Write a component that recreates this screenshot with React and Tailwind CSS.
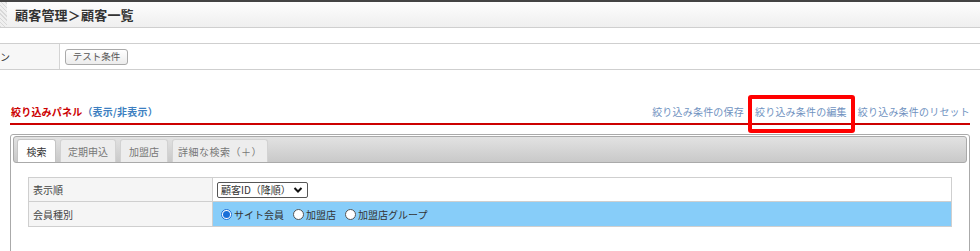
export default function App() {
  const font = { fontFamily: '"Noto Sans CJK JP", "Noto Sans", sans-serif' };
  return (
    <div className="relative w-[980px] h-[251px] bg-white overflow-hidden text-[#333]" style={font}>
      {/* top dark bar */}
      <div className="h-[2px] bg-[#444]" />
      {/* header */}
      <div className="flex h-[26px] border-b border-[#cfcfcf] bg-gradient-to-b from-[#fdfdfd] to-[#efefef]">
        <div className="w-[7px] bg-[repeating-linear-gradient(45deg,#d8d8d8_0px,#d8d8d8_1px,#efefef_1px,#efefef_3px)]" />
        <div className="pl-[8px] flex items-center text-[13px] font-bold text-[#333] tracking-[0.2px]">顧客管理＞顧客一覧</div>
      </div>
      <div className="h-[15px]" />
      {/* conditions row */}
      <div className="flex h-[27px] border-t border-b border-[#cfcfcf]">
        <div className="w-[60px] bg-[#f7f7f7] border-r border-[#d4d4d4] flex items-center text-[10px] text-[#333]">ン</div>
        <div className="flex items-center pl-[5px]">
          <div className="h-[16px] w-[63px] flex items-center justify-center border border-[#aaa] rounded-[3px] bg-gradient-to-b from-[#fff] to-[#ececec] text-[9.5px] text-[#555]">テスト条件</div>
        </div>
      </div>
      <div className="h-[33px]" />
      {/* panel title row */}
      <div className="mx-[10px] flex items-end justify-between h-[22px] pb-[4px] border-b-2 border-[#cc0000]">
        <div className="text-[10px] leading-[14px] pl-[1px] tracking-[0.2px]">
          <span className="font-bold text-[#cc0000]">絞り込みパネル</span>
          <span className="font-bold text-[#3d7fc1]">（表示/非表示）</span>
        </div>
        <div className="flex text-[10px] leading-[14px] text-[#6f92bf] gap-[11px] tracking-[0.2px]">
          <span>絞り込み条件の保存</span>
          <span>絞り込み条件の編集</span>
          <span>絞り込み条件のリセット</span>
        </div>
      </div>
      {/* tab panel */}
      <div className="mx-[10px] mt-[9px] border border-[#aaa] rounded-t-[3px] pt-[1px] px-[2px] h-[140px]">
        <div className="h-[27px] rounded-[3px] border border-[#aaa] bg-gradient-to-b from-[#e2e2e2] to-[#c9c9c9] flex items-end pl-[3px] gap-[4px]">
          <div className="h-[23px] w-[39px] flex items-center justify-center bg-white border border-b-0 border-[#c5c5c5] rounded-t-[3px] text-[10px] text-[#333]">検索</div>
          <div className="h-[23px] w-[56px] flex items-center justify-center bg-[#ededed] border border-b-0 border-[#d2d2d2] rounded-t-[3px] text-[10px] text-[#777]">定期申込</div>
          <div className="h-[23px] w-[48px] flex items-center justify-center bg-[#ededed] border border-b-0 border-[#d2d2d2] rounded-t-[3px] text-[10px] text-[#777]">加盟店</div>
          <div className="h-[23px] w-[96px] flex items-center justify-center bg-[#ededed] border border-b-0 border-[#d2d2d2] rounded-t-[3px] text-[10px] text-[#777] tracking-[0.5px]">詳細な検索（＋）</div>
        </div>
        <div className="ml-[15px] mr-[15px] mt-[14px] border border-[#cfcfcf]">
          <div className="flex h-[24px] border-b border-[#cfcfcf]">
            <div className="w-[184px] bg-[#f5f5f5] border-r border-[#cfcfcf] flex items-center pl-[4px] text-[10px] text-[#444]">表示順</div>
            <div className="flex-1 bg-white flex items-center pl-[4px]">
              <div className="h-[16px] w-[91px] border border-[#555] rounded-[2px] flex items-center justify-between pl-[3px] pr-[4px] text-[10px] text-[#333]">
                <span>顧客ID（降順）</span>
                <svg width="10" height="8" viewBox="0 0 10 8"><path d="M1.5 2 L5 5.5 L8.5 2" fill="none" stroke="#111" strokeWidth="2" /></svg>
              </div>
            </div>
          </div>
          <div className="flex h-[24px]">
            <div className="w-[184px] bg-[#f5f5f5] border-r border-[#cfcfcf] flex items-center pl-[4px] text-[10px] text-[#444]">会員種別</div>
            <div className="flex-1 bg-[#87cdf9] flex items-center pl-[8px] text-[10px] text-[#333]">
              <span className="flex items-center mr-[9px]">
                <span className="w-[11px] h-[11px] rounded-full border border-[#1a6fd8] bg-white flex items-center justify-center mr-[2px]"><span className="w-[7px] h-[7px] rounded-full bg-[#1a6fd8]" /></span>サイト会員
              </span>
              <span className="flex items-center mr-[9px]">
                <span className="w-[11px] h-[11px] rounded-full border border-[#555] bg-white mr-[2px]" />加盟店
              </span>
              <span className="flex items-center">
                <span className="w-[11px] h-[11px] rounded-full border border-[#555] bg-white mr-[2px]" />加盟店グループ
              </span>
            </div>
          </div>
        </div>
      </div>
      {/* highlight box */}
      <div className="absolute left-[748px] top-[95px] w-[107px] h-[38px] border-[4px] border-[#ff0000] rounded-[3px]" />
    </div>
  );
}
